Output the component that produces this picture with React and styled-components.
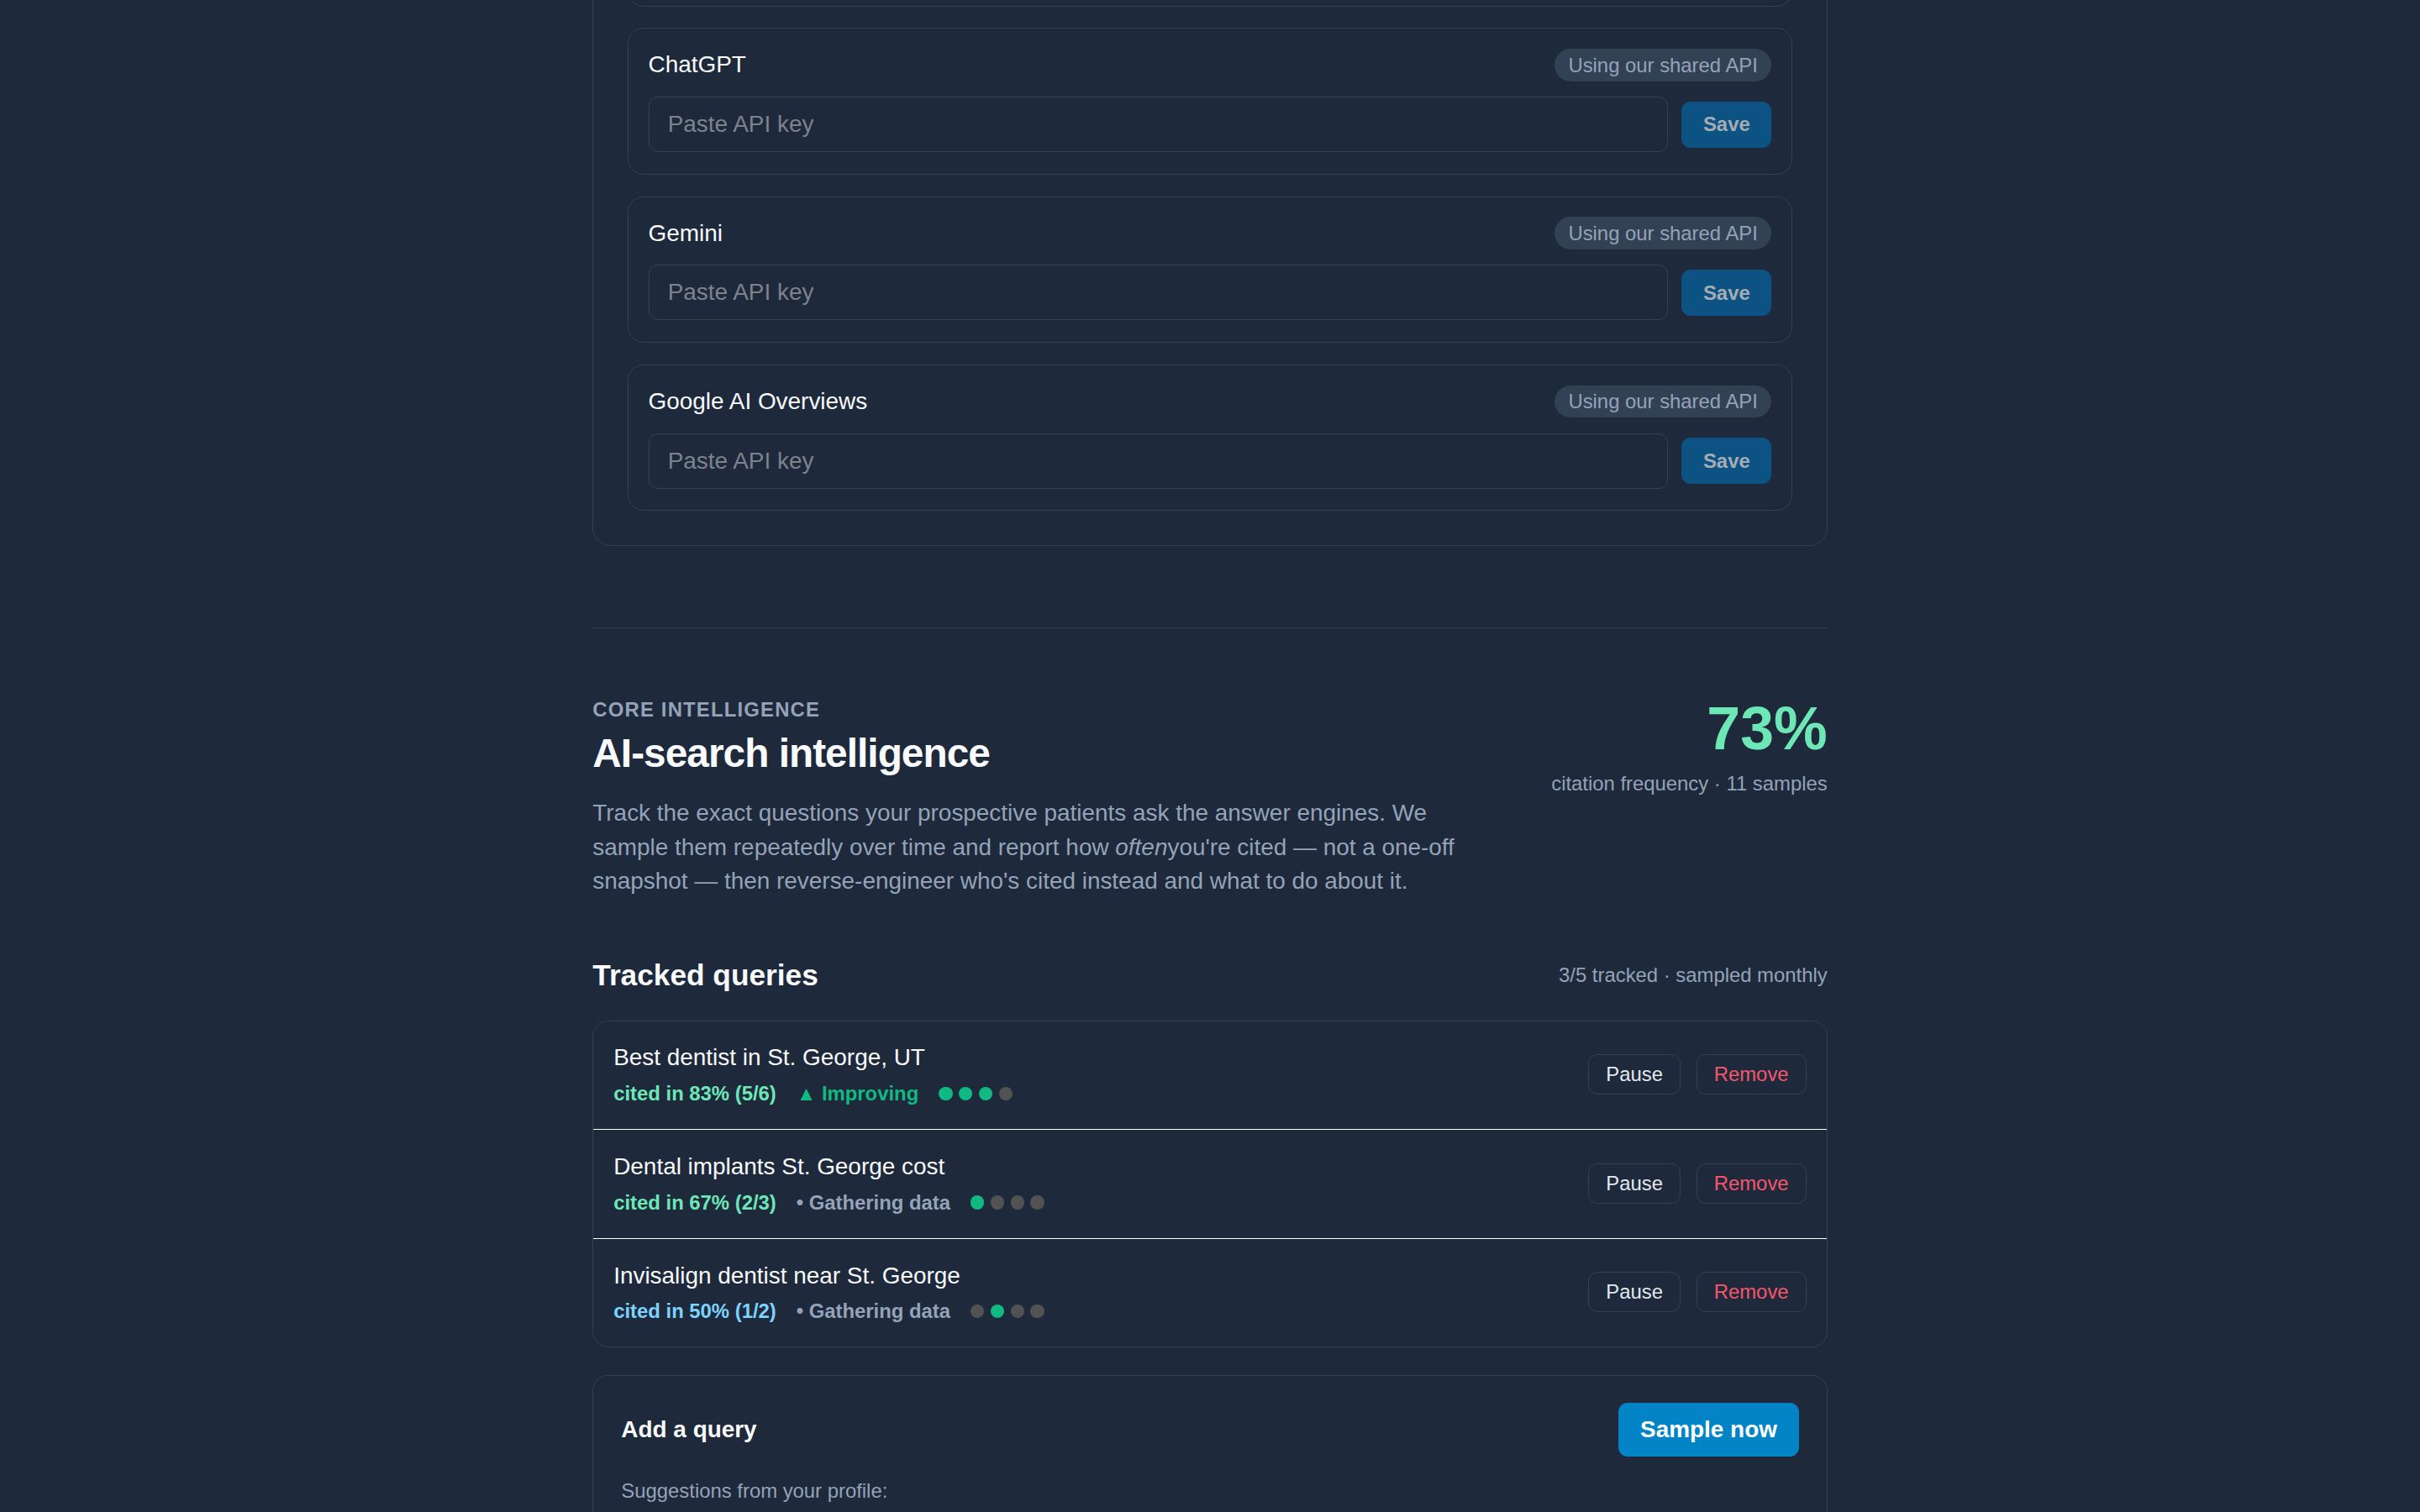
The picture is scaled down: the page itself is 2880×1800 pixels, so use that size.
import React from "react";
import styled, { createGlobalStyle } from "styled-components";

const engines = ["Perplexity", "ChatGPT", "Gemini", "Google AI Overviews"];

const queries = [
  {
    text: "Best dentist in St. George, UT",
    rate: "cited in 83% (5/6)",
    rateColor: "#6ee7b7",
    status: "▲ Improving",
    statusColor: "#10b981",
    samples: [1, 1, 1, 0],
  },
  {
    text: "Dental implants St. George cost",
    rate: "cited in 67% (2/3)",
    rateColor: "#6ee7b7",
    status: "• Gathering data",
    statusColor: "#94a3b8",
    samples: [1, 0, 0, 0],
  },
  {
    text: "Invisalign dentist near St. George",
    rate: "cited in 50% (1/2)",
    rateColor: "#7dd3fc",
    status: "• Gathering data",
    statusColor: "#94a3b8",
    samples: [0, 1, 0, 0],
  },
];

const suggestions = [
  "Emergency dentist St. George",
  "Teeth whitening near me",
  "Pediatric dentist Washington County",
];

// ── Styled components ──────────────────────────────────────────────

const GlobalStyle = createGlobalStyle`
  html {
    zoom: 1.8367;
    background: #1e293b;
  }

  body {
    margin: 0;
    background: #1e293b;
    color: #f1f5f9;
    font-family: "Liberation Sans", Arial, Helvetica, sans-serif;
  }

  * {
    box-sizing: border-box;
  }
`;

const Page = styled.main`
  max-width: 800px;
  margin: -177.5px auto 0;
  padding-bottom: 48px;
`;

const KeysPanel = styled.section`
  border: 1px solid #334155;
  border-radius: 12px;
  padding: 22px;
`;

const PanelHead = styled.header`
  margin-bottom: 16px;
`;

const PanelTitle = styled.h3`
  margin: 0;
  font-size: 17px;
  line-height: 24px;
  color: #f8fafc;
`;

const PanelSub = styled.p`
  margin: 4px 0 0;
  font-size: 13px;
  line-height: 20px;
  color: #94a3b8;
`;

const KeyList = styled.div`
  display: flex;
  flex-direction: column;
  gap: 14px;
`;

const KeyCard = styled.div`
  border: 1px solid #334155;
  border-radius: 10px;
  padding: 13px 13px 14px;
`;

const KeyHead = styled.div`
  display: flex;
  align-items: center;
  justify-content: space-between;
  height: 21px;
  margin-bottom: 10px;
`;

const KeyName = styled.span`
  font-size: 0.95rem;
  color: #f8fafc;
`;

const Badge = styled.span`
  font-size: 13px;
  line-height: 15px;
  padding: 3px 9px;
  border-radius: 999px;
  background: #334155;
  color: #94a3b8;
`;

const KeyRow = styled.div`
  display: flex;
  align-items: center;
  gap: 9px;
  height: 36px;
`;

const KeyInput = styled.input`
  flex: 1;
  height: 36px;
  padding: 0 12px;
  font: inherit;
  font-size: 0.95rem;
  color: #f1f5f9;
  background: transparent;
  border: 1px solid #334155;
  border-radius: 6px;
  outline: none;

  &::placeholder {
    color: #7c838d;
  }
`;

const SaveButton = styled.button`
  font-family: inherit;
  font-size: 13px;
  font-weight: 700;
  line-height: 16px;
  padding: 7px 14px;
  border: none;
  border-radius: 6px;
  background: #0c5282;
  color: #a4acb6;
  cursor: not-allowed;
`;

const Divider = styled.hr`
  border: none;
  border-top: 1px solid #334155;
  margin: 53px 0 45px;
`;

const IntelHeader = styled.div`
  display: flex;
  align-items: flex-start;
  justify-content: space-between;
  gap: 24px;
`;

const IntelText = styled.div`
  max-width: 580px;
`;

const Eyebrow = styled.div`
  font-size: 13px;
  line-height: 15px;
  font-weight: 700;
  letter-spacing: 0.05em;
  text-transform: uppercase;
  color: #94a3b8;
`;

const Heading = styled.h2`
  margin: 6px 0 0;
  font-size: 26px;
  line-height: 31px;
  letter-spacing: -0.02em;
  color: #f8fafc;
`;

const Lead = styled.p`
  margin: 12px 0 0;
  font-size: 0.95rem;
  line-height: 22px;
  color: #94a3b8;
`;

const Stat = styled.div`
  flex-shrink: 0;
  text-align: right;
`;

const StatValue = styled.div`
  font-size: 39px;
  line-height: 40px;
  font-weight: 700;
  color: #6ee7b7;
`;

const StatNote = styled.div`
  margin-top: 8px;
  font-size: 13px;
  line-height: 15px;
  color: #94a3b8;
`;

const SectionHead = styled.div`
  display: flex;
  align-items: center;
  justify-content: space-between;
  margin: 39px 0 18px;
`;

const SectionTitle = styled.h3`
  margin: 0;
  font-size: 1.2rem;
  line-height: 22px;
  color: #f8fafc;
`;

const Muted = styled.span`
  font-size: 13px;
  color: #94a3b8;
`;

const QueryList = styled.div`
  border: 1px solid #334155;
  border-radius: 10px;
  overflow: hidden;
`;

const QueryRow = styled.div`
  display: flex;
  align-items: center;
  justify-content: space-between;
  padding: 14px 13px 15px;

  & + & {
    border-top: 1px solid #ffffff;
  }
`;

const QueryText = styled.div`
  font-size: 0.95rem;
  line-height: 20px;
  color: #f8fafc;
`;

const Meta = styled.div`
  display: flex;
  align-items: center;
  gap: 13px;
  margin-top: 5px;
  font-size: 13px;
  line-height: 16px;
  font-weight: 700;
`;

const Tone = styled.span`
  color: ${({ $color }) => $color};
`;

const Dots = styled.span`
  display: flex;
  gap: 4px;
`;

const Dot = styled.span`
  width: 9px;
  height: 9px;
  border-radius: 50%;
  background: ${({ $hit }) => ($hit ? "#10b981" : "#525252")};
`;

const Actions = styled.div`
  display: flex;
  gap: 10px;
`;

const GhostButton = styled.button`
  font-family: inherit;
  font-size: 13px;
  line-height: 15px;
  padding: 5px 11px;
  background: transparent;
  border: 1px solid #334155;
  border-radius: 6px;
  color: ${({ $danger }) => ($danger ? "#f5576c" : "#e2e8f0")};
  cursor: pointer;
`;

const AddCard = styled.section`
  margin-top: 18px;
  border: 1px solid #334155;
  border-radius: 10px;
  padding: 17px 18px 18px;
`;

const AddHead = styled.div`
  display: flex;
  align-items: center;
  justify-content: space-between;
`;

const AddTitle = styled.h4`
  margin: 0;
  font-size: 0.95rem;
  color: #f8fafc;
`;

const PrimaryButton = styled.button`
  font-family: inherit;
  font-size: 0.95rem;
  line-height: 17px;
  font-weight: 700;
  padding: 9px 14px;
  border: none;
  border-radius: 6px;
  background: #0284c7;
  color: #fff;
  cursor: pointer;
`;

const Hint = styled.div`
  margin-top: 15px;
  font-size: 13px;
  line-height: 15px;
  color: #94a3b8;
`;

const Chips = styled.div`
  display: flex;
  flex-wrap: wrap;
  gap: 8px;
  margin-top: 12px;
`;

const Chip = styled.button`
  font-family: inherit;
  font-size: 13px;
  padding: 5px 11px;
  border-radius: 999px;
  border: 1px dashed #475569;
  background: transparent;
  color: #cbd5e1;
`;

export default function App() {
  return (
    <>
      <GlobalStyle />
      <Page>
        <KeysPanel>
          <PanelHead>
            <PanelTitle>Answer engine keys</PanelTitle>
            <PanelSub>Bring your own keys, or keep using ours.</PanelSub>
          </PanelHead>
          <KeyList>
            {engines.map((name) => (
              <KeyCard key={name}>
                <KeyHead>
                  <KeyName>{name}</KeyName>
                  <Badge>Using our shared API</Badge>
                </KeyHead>
                <KeyRow>
                  <KeyInput type="password" placeholder="Paste API key" />
                  <SaveButton disabled>Save</SaveButton>
                </KeyRow>
              </KeyCard>
            ))}
          </KeyList>
        </KeysPanel>

        <Divider />

        <IntelHeader>
          <IntelText>
            <Eyebrow>Core intelligence</Eyebrow>
            <Heading>AI-search intelligence</Heading>
            <Lead>
              Track the exact questions your prospective patients ask the answer
              engines. We sample them repeatedly over time and report how{" "}
              <em>often</em>you're cited — not a one-off snapshot — then
              reverse-engineer who's cited instead and what to do about it.
            </Lead>
          </IntelText>
          <Stat>
            <StatValue>73%</StatValue>
            <StatNote>citation frequency · 11 samples</StatNote>
          </Stat>
        </IntelHeader>

        <SectionHead>
          <SectionTitle>Tracked queries</SectionTitle>
          <Muted>3/5 tracked · sampled monthly</Muted>
        </SectionHead>

        <QueryList>
          {queries.map((q) => (
            <QueryRow key={q.text}>
              <div>
                <QueryText>{q.text}</QueryText>
                <Meta>
                  <Tone $color={q.rateColor}>{q.rate}</Tone>
                  <Tone $color={q.statusColor}>{q.status}</Tone>
                  <Dots>
                    {q.samples.map((hit, i) => (
                      <Dot key={i} $hit={hit} />
                    ))}
                  </Dots>
                </Meta>
              </div>
              <Actions>
                <GhostButton>Pause</GhostButton>
                <GhostButton $danger>Remove</GhostButton>
              </Actions>
            </QueryRow>
          ))}
        </QueryList>

        <AddCard>
          <AddHead>
            <AddTitle>Add a query</AddTitle>
            <PrimaryButton>Sample now</PrimaryButton>
          </AddHead>
          <Hint>Suggestions from your profile:</Hint>
          <Chips>
            {suggestions.map((s) => (
              <Chip key={s}>+ {s}</Chip>
            ))}
          </Chips>
        </AddCard>
      </Page>
    </>
  );
}
